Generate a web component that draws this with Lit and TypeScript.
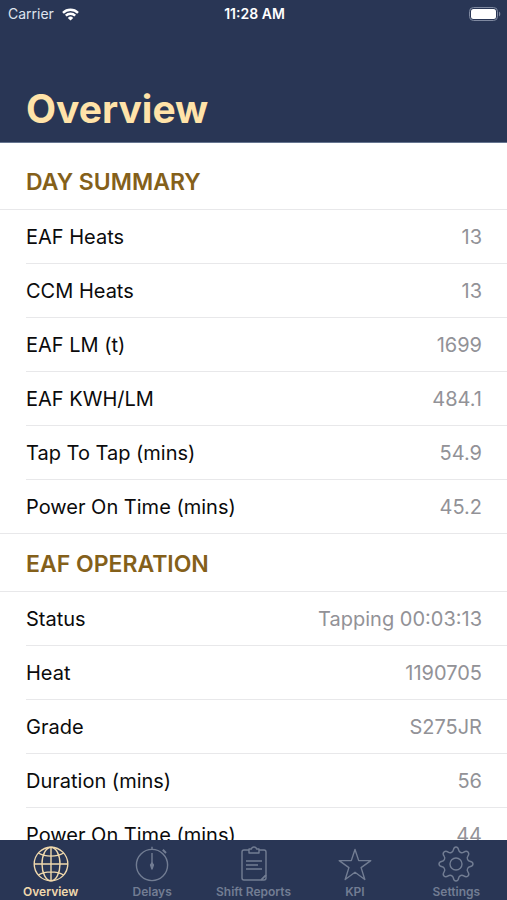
import { LitElement, html, css, svg } from "lit";
import { customElement, state } from "lit/decorators.js";
import { classMap } from "lit/directives/class-map.js";

type Row = [label: string, value: string];
interface Section {
  title: string;
  rows: Row[];
}

const sections: Section[] = [
  {
    title: "DAY SUMMARY",
    rows: [
      ["EAF Heats", "13"],
      ["CCM Heats", "13"],
      ["EAF LM (t)", "1699"],
      ["EAF KWH/LM", "484.1"],
      ["Tap To Tap (mins)", "54.9"],
      ["Power On Time (mins)", "45.2"],
    ],
  },
  {
    title: "EAF OPERATION",
    rows: [
      ["Status", "Tapping 00:03:13"],
      ["Heat", "1190705"],
      ["Grade", "S275JR"],
      ["Duration (mins)", "56"],
      ["Power On Time (mins)", "44"],
    ],
  },
];

const tabs = [
  {
    name: "Overview",
    icon: svg`
      <circle cx="18" cy="18" r="16.8"/>
      <ellipse cx="18" cy="18" rx="9" ry="16.8"/>
      <path d="M18 1.2v33.6M1.2 18h33.6M5.400 7c7 4.200 18.200 4.200 25.200 0M5.400 29c7-4.200 18.200-4.200 25.200 0"/>`,
  },
  {
    name: "Delays",
    icon: svg`
      <circle cx="18" cy="19" r="15.600"/>
      <path d="M18 .8v2.600M18 7v11"/>
      <path d="M28.800 3.800l3.200 3.200" stroke-width="2"/>
      <path class="solid" d="M18 17l1.400 2-1.400 4-1.400-4z"/>`,
  },
  {
    name: "Shift Reports",
    icon: svg`
      <path d="M13 4H8a2 2 0 0 0-2 2v26a2 2 0 0 0 2 2h17l5-5V6a2 2 0 0 0-2-2h-5"/>
      <path d="M13 3h2.500C15.700 1.600 16.600 1 18 1s2.300.6 2.500 2H23v4H13z"/>
      <path d="M10 15h16M10 19h12M10 23h16"/>
      <path d="M30 29v3a2 2 0 0 1-2 2h-3M25 34l5-5"/>`,
  },
  {
    name: "KPI",
    icon: svg`
      <path d="M18 3.500l3.700 11.100h12.100L24.100 21.600l3.700 11.900L18 26.300 8.200 33.500l3.700-11.900L2.200 14.600h12.100z"/>`,
  },
  {
    name: "Settings",
    icon: svg`
      <circle cx="18" cy="18" r="6"/>
      <path d="M15.300 4.200C15.700 1.800 16.300 1 18 1s2.300.8 2.700 3.200c.2 1.300 1 1.900 2 2.300 1.100.5 2 .4 3.100-.4 2-1.400 3.100-1.300 4.200-.1s1.300 2.200-.1 4.200c-.8 1.100-.9 2-.4 3.100.4 1 1 1.800 2.300 2 2.400.4 3.200 1 3.200 2.700s-.8 2.300-3.200 2.700c-1.300.2-1.900 1-2.300 2-.5 1.100-.4 2 .4 3.100 1.400 2 1.300 3.100.1 4.200s-2.200 1.300-4.200-.1c-1.100-.8-2-.9-3.100-.4-1 .4-1.800 1-2 2.300C20.300 34.200 19.700 35 18 35s-2.300-.8-2.700-3.200c-.2-1.300-1-1.900-2-2.300-1.100-.5-2-.4-3.100.4-2 1.400-3.100 1.300-4.200.1s-1.300-2.200.1-4.200c.8-1.100.9-2 .4-3.100-.4-1-1-1.800-2.300-2C1.800 20.300 1 19.700 1 18s.8-2.300 3.200-2.700c1.300-.2 1.900-1 2.300-2 .5-1.100.4-2-.4-3.100C4.700 8.200 4.800 7.100 6 6s2.200-1.300 4.200.1c1.100.8 2 .9 3.100.4 1-.4 1.800-1 2-2.300z"/>`,
  },
];

@customElement("app-root")
export class AppRoot extends LitElement {
  @state() private active = "Overview";

  static styles = css`
    :host {
      display: flex;
      flex-direction: column;
      height: 100vh;
      background: #fff;
      color: #0b0b0c;
      font-family: Inter, "Liberation Sans", sans-serif;
      font-size: 20px;
      line-height: 24px;
    }
    .header {
      flex: none;
      background: #293655;
      border-bottom: 1px solid #667590;
    }
    .status {
      display: grid;
      grid-template-columns: 1fr auto 1fr;
      align-items: center;
      height: 28px;
      padding: 0 6px 0 8px;
      color: #fff;
      font-size: 14px;
      line-height: 20px;
    }
    .carrier {
      display: flex;
      align-items: center;
      gap: 8px;
      color: #dfe4ee;
    }
    .wifi {
      width: 17px;
      height: 13px;
      fill: none;
      stroke: #fff;
      stroke-width: 2.4;
    }
    .time {
      font-weight: 600;
    }
    .battery {
      justify-self: end;
      width: 32px;
      height: 14px;
    }
    .title {
      margin: 0;
      padding: 57px 26px 9px;
      color: #ffe3a9;
      font-size: 39px;
      line-height: 48px;
      font-weight: 700;
    }
    .content {
      flex: 1;
      min-height: 0;
      overflow-y: auto;
      scrollbar-width: none;
    }
    .heading {
      margin: 0;
      padding: 18px 26px 15px;
      border-bottom: 1px solid #e8e8ea;
      color: #84601a;
      font-size: 23px;
      line-height: 24px;
      font-weight: 600;
    }
    .section:first-child .heading {
      padding-top: 27px;
    }
    .rows {
      margin: 0;
      padding-left: 26px;
      border-bottom: 1px solid #e8e8ea;
    }
    .row {
      display: flex;
      justify-content: space-between;
      align-items: center;
      box-sizing: border-box;
      height: 54px;
      padding-right: 25px;
      border-bottom: 1px solid #e8e8ea;
    }
    .row:last-child {
      height: 53px;
      border-bottom: 0;
    }
    .value {
      margin: 0;
      color: #929297;
    }
    .tabs {
      flex: none;
      display: flex;
      height: 60px;
      background: #293655;
    }
    .tab {
      flex: 1 1 0;
      min-width: 0;
      display: flex;
      flex-direction: column;
      align-items: center;
      gap: 2px;
      padding: 6px 0 0;
      border: 0;
      background: none;
      color: #727d93;
      font-family: inherit;
      font-size: 12px;
      line-height: 16px;
      font-weight: 600;
      white-space: nowrap;
      cursor: pointer;
    }
    .tab.active {
      color: #f0d9ad;
    }
    .icon {
      width: 36px;
      height: 36px;
      fill: none;
      stroke: currentColor;
      stroke-width: 1.4;
      stroke-linejoin: round;
    }
    .solid {
      fill: currentColor;
    }
  `;

  render() {
    return html`
      <header class="header">
        <div class="status">
          <span class="carrier">
            Carrier
            <svg class="wifi" viewBox="0 0 17 13" aria-hidden="true">
              <path d="M1 4.800a10.600 10.600 0 0 1 15 0M3.800 7.700a6.700 6.700 0 0 1 9.400 0" />
              <path d="M8.500 12.600L5.800 9.900a3.900 3.900 0 0 1 5.400 0z" fill="#fff" stroke="none" />
            </svg>
          </span>
          <span class="time">11:28 AM</span>
          <svg class="battery" viewBox="0 0 32 14" role="img" aria-label="Battery full">
            <rect x=".5" y=".5" width="28" height="13" rx="4" fill="none" stroke="#7f89a0" />
            <rect x="2" y="2" width="25" height="10" rx="2.500" fill="#fff" />
            <path d="M30 4.500a3 3 0 0 1 0 5z" fill="#7f89a0" />
          </svg>
        </div>
        <h1 class="title">Overview</h1>
      </header>
      <main class="content">
        ${sections.map(
          (s) => html`
            <section class="section">
              <h2 class="heading">${s.title}</h2>
              <dl class="rows">
                ${s.rows.map(
                  ([label, value]) => html`
                    <div class="row">
                      <dt>${label}</dt>
                      <dd class="value">${value}</dd>
                    </div>
                  `
                )}
              </dl>
            </section>
          `
        )}
      </main>
      <nav class="tabs" aria-label="Main">
        ${tabs.map(
          (t) => html`
            <button
              type="button"
              class=${classMap({ tab: true, active: t.name === this.active })}
              aria-current=${t.name === this.active ? "page" : "false"}
              @click=${() => (this.active = t.name)}
            >
              <svg class="icon" viewBox="0 0 36 36" aria-hidden="true">${t.icon}</svg>
              <span>${t.name}</span>
            </button>
          `
        )}
      </nav>
    `;
  }
}
